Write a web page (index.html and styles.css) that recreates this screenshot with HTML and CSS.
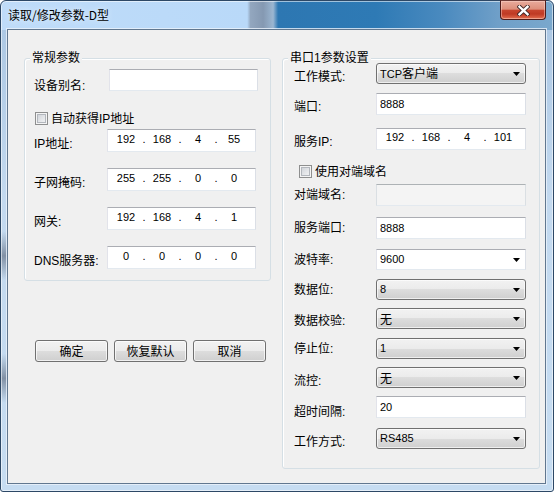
FILE: index.html
```html
<!DOCTYPE html>
<html lang="zh-CN">
<head>
<meta charset="utf-8">
<title>读取/修改参数-D型</title>
<link rel="stylesheet" href="styles.css">
</head>
<body>
<div class="window">
  <div class="titlebar">
    <span class="title">读取/修改参数-D型</span>
    <span class="close">
      <svg width="13" height="11" viewBox="0 0 13 11">
        <path class="x-outline" d="M2.5 1.8L10.5 9.2M10.5 1.8L2.5 9.2"/>
        <path class="x-fill" d="M2.5 1.8L10.5 9.2M10.5 1.8L2.5 9.2"/>
      </svg>
    </span>
  </div>
  <div class="client">
    <div class="left-col">
      <div class="group group-general">
        <div class="group-title">常规参数</div>
        <div class="grid-general">
          <div class="row">
            <span class="label label-alias">设备别名:</span>
            <span class="input input-left"></span>
          </div>
          <div class="row">
            <span class="check check-left"><span class="cb"></span><span class="cb-text">自动获得IP地址</span></span>
          </div>
          <div class="row">
            <span class="label label-ip">IP地址:</span>
            <span class="ip"><span class="oct">192</span><span class="dot">.</span><span class="oct">168</span><span class="dot">.</span><span class="oct">4</span><span class="dot">.</span><span class="oct">55</span></span>
          </div>
          <div class="row">
            <span class="label label-ip">子网掩码:</span>
            <span class="ip"><span class="oct">255</span><span class="dot">.</span><span class="oct">255</span><span class="dot">.</span><span class="oct">0</span><span class="dot">.</span><span class="oct">0</span></span>
          </div>
          <div class="row">
            <span class="label label-ip">网关:</span>
            <span class="ip"><span class="oct">192</span><span class="dot">.</span><span class="oct">168</span><span class="dot">.</span><span class="oct">4</span><span class="dot">.</span><span class="oct">1</span></span>
          </div>
          <div class="row">
            <span class="label label-ip">DNS服务器:</span>
            <span class="ip"><span class="oct">0</span><span class="dot">.</span><span class="oct">0</span><span class="dot">.</span><span class="oct">0</span><span class="dot">.</span><span class="oct">0</span></span>
          </div>
        </div>
      </div>
      <div class="buttons">
        <span class="btn">确定</span>
        <span class="btn">恢复默认</span>
        <span class="btn">取消</span>
      </div>
    </div>

    <div class="group group-serial">
      <div class="group-title">串口1参数设置</div>
      <div class="grid-serial">
        <div class="row">
          <span class="label label-r">工作模式:</span>
          <span class="combo"><span>TCP<span class="zh">客户端</span></span><svg class="arrow" width="7" height="4" viewBox="0 0 7 4"><path d="M0 0H7L3.5 4Z"/></svg></span>
        </div>
        <div class="row">
          <span class="label label-r">端口:</span>
          <span class="input input-r">8888</span>
        </div>
        <div class="row">
          <span class="label label-r">服务IP:</span>
          <span class="ip ip-r"><span class="oct">192</span><span class="dot">.</span><span class="oct">168</span><span class="dot">.</span><span class="oct">4</span><span class="dot">.</span><span class="oct">101</span></span>
        </div>
        <div class="row">
          <span class="check check-right"><span class="cb"></span><span class="cb-text">使用对端域名</span></span>
        </div>
        <div class="row">
          <span class="label label-r label-hi">对端域名:</span>
          <span class="input input-r input-disabled"></span>
        </div>
        <div class="row">
          <span class="label label-r label-hi">服务端口:</span>
          <span class="input input-r">8888</span>
        </div>
        <div class="row">
          <span class="label label-r label-hi">波特率:</span>
          <span class="combo combo-edit"><span>9600</span><svg class="arrow" width="7" height="4" viewBox="0 0 7 4"><path d="M0 0H7L3.5 4Z"/></svg></span>
        </div>
        <div class="row">
          <span class="label label-r label-hi">数据位:</span>
          <span class="combo"><span>8</span><svg class="arrow" width="7" height="4" viewBox="0 0 7 4"><path d="M0 0H7L3.5 4Z"/></svg></span>
        </div>
        <div class="row">
          <span class="label label-r label-mid">数据校验:</span>
          <span class="combo"><span class="zh">无</span><svg class="arrow" width="7" height="4" viewBox="0 0 7 4"><path d="M0 0H7L3.5 4Z"/></svg></span>
        </div>
        <div class="row">
          <span class="label label-r label-hi">停止位:</span>
          <span class="combo"><span>1</span><svg class="arrow" width="7" height="4" viewBox="0 0 7 4"><path d="M0 0H7L3.5 4Z"/></svg></span>
        </div>
        <div class="row">
          <span class="label label-r">流控:</span>
          <span class="combo"><span class="zh">无</span><svg class="arrow" width="7" height="4" viewBox="0 0 7 4"><path d="M0 0H7L3.5 4Z"/></svg></span>
        </div>
        <div class="row">
          <span class="label label-r label-low">超时间隔:</span>
          <span class="input input-r">20</span>
        </div>
        <div class="row">
          <span class="label label-r">工作方式:</span>
          <span class="combo"><span>RS485</span><svg class="arrow" width="7" height="4" viewBox="0 0 7 4"><path d="M0 0H7L3.5 4Z"/></svg></span>
        </div>
      </div>
    </div>
  </div>
</div>
</body>
</html>
```

FILE: styles.css
```css
* { box-sizing: border-box; }

html, body {
  margin: 0;
  padding: 0;
  background: #ffffff;
}

body {
  width: 554px;
  height: 492px;
  overflow: hidden;
  font-family: "Noto Sans CJK SC", sans-serif;
  font-size: 12px;
  color: #000;
}

/* ---------- window frame ---------- */
.window {
  width: 554px;
  height: 492px;
  display: flex;
  flex-direction: column;
  border: 1px solid #2d4866;
  border-radius: 6px 6px 3px 3px;
  padding: 0 7px 7px 6px;
  background:
    linear-gradient(90deg,
      #bfdcf9 0%, #b9d9f9 44.6%, #93a7bf 45.2%, #8599b2 47.5%,
      #9bb6d1 49.3%, #2d77b2 50.2%, #2e7ab5 68%, #4a8abf 80%,
      #6f9fc8 90%, #7aa8cd 100%) 0 0 / 100% 29px no-repeat,
    linear-gradient(180deg,
      rgba(118,132,152,0) 47%, rgba(118,132,152,.85) 52%, rgba(118,132,152,0) 57%,
      rgba(118,132,152,0) 72%, rgba(118,132,152,.85) 77%, rgba(118,132,152,0) 82%) 0 0 / 7px 100% no-repeat,
    linear-gradient(180deg, #a9c5e2 0%, #c3d9ef 40%, #c6dcf1 100%);
  box-shadow: inset 0 0 0 1px rgba(255,255,255,.55);
}

.titlebar {
  height: 28px;
  flex: none;
  display: flex;
  justify-content: space-between;
  align-items: flex-start;
}

.title {
  margin: 7px 0 0 1px;
  line-height: 14px;
  height: 14px;
  font-size: 12px;
  font-family: "Noto Sans CJK SC", sans-serif;
  color: #000;
  text-shadow: 0 0 6px rgba(255,255,255,.8);
}

.close {
  width: 46px;
  height: 20px;
  margin-top: -1px;
  border: 1px solid #4f1c1a;
  border-top-color: #6b3a36;
  border-radius: 0 0 4px 4px;
  background: linear-gradient(180deg,
    #e8ab9c 0%, #dd8f7b 45%, #c7452e 52%, #bf3a24 72%, #d65a3f 90%, #e47a5a 100%);
  box-shadow: inset 0 0 0 1px rgba(255,220,210,.45);
  display: flex;
  align-items: center;
  justify-content: center;
}

.x-outline {
  fill: none;
  stroke: #3d2626;
  stroke-width: 4.2;
  stroke-linecap: square;
}

.x-fill {
  fill: none;
  stroke: #ffffff;
  stroke-width: 2.4;
  stroke-linecap: square;
}

/* ---------- client area ---------- */
.client {
  flex: 1;
  display: flex;
  align-items: flex-start;
  gap: 11px;
  padding: 28px 5px 0 16px;
  background: #f0f0f0;
  border: 1px solid #61778f;
  box-shadow: 0 0 0 1px rgba(235,243,251,.8);
}

.left-col {
  width: 247px;
  flex: none;
  display: flex;
  flex-direction: column;
}

.group {
  display: flex;
  flex-direction: column;
  border: 1px solid #d5dfe5;
  border-radius: 3px;
  box-shadow: inset 1px 1px 0 #ffffff;
}

.group-title {
  align-self: flex-start;
  margin: -8px 0 -2px 5px;
  padding: 0 2px;
  height: 14px;
  line-height: 14px;
  background: #f0f0f0;
  font-family: "Liberation Sans", "Noto Sans CJK SC", sans-serif;
  font-size: 12px;
}

.group-serial {
  width: 258px;
  flex: none;
}

.grid-general {
  display: grid;
  grid-template-rows: 43px 17px 39px 39px 39px 23px;
  padding: 6px 0 11px 9px;
}

.grid-serial {
  display: grid;
  grid-template-rows: 30px 35px 37px 19px 33px 32px 30px 29px 30px 29px 29px 32px 21px;
  padding: 0 13px 19px 11px;
}

.row {
  display: flex;
  align-items: flex-start;
}

/* ---------- labels ---------- */
.label {
  flex: none;
  height: 14px;
  line-height: 14px;
  white-space: nowrap;
  font-family: "Liberation Sans", "Noto Sans CJK SC", sans-serif;
  font-size: 12px;
}

.label-alias { width: 75px; margin-top: 10px; }
.label-ip { width: 73px; margin-top: 8px; }
.label-r { width: 82px; margin-top: 7px; }
.label-r.label-hi { margin-top: 4px; }
.label-r.label-mid { margin-top: 6px; }
.label-r.label-low { margin-top: 9px; }

/* ---------- text inputs ---------- */
.input {
  flex: none;
  width: 149px;
  height: 22px;
  padding: 0 3px;
  background: #ffffff;
  border: 1px solid;
  border-color: #abadb3 #dbdfe6 #e3e9ef #e2e3ea;
  font-family: "Liberation Sans", "Noto Sans CJK SC", sans-serif;
  font-size: 11px;
  line-height: 20px;
  white-space: nowrap;
}

.input-r { width: 150px; }

.input-disabled {
  background: #f4f4f4;
  border-color: #adb2b5 #dadfe3 #e3e9ef #dadfe3;
}

/* ---------- IP address inputs ---------- */
.ip {
  flex: none;
  display: flex;
  width: 149px;
  height: 23px;
  padding-left: 5px;
  background: #ffffff;
  border: 1px solid;
  border-color: #abadb3 #dbdfe6 #e3e9ef #e2e3ea;
  font-family: "Liberation Sans", sans-serif;
  font-size: 11px;
  line-height: 18px;
}

.ip-r {
  width: 150px;
  height: 22px;
  line-height: 17px;
}

.oct {
  width: 26px;
  text-align: center;
}

.dot {
  width: 10px;
  text-align: center;
}

/* ---------- checkboxes ---------- */
.check {
  display: flex;
  align-items: center;
  height: 13px;
}

.check-left { margin-left: 1px; }
.check-right { margin-left: 5px; }

.cb {
  width: 13px;
  height: 13px;
  flex: none;
  border: 1px solid #8e8f8f;
  background: linear-gradient(135deg, #c9cdd3 0%, #e4e6e9 55%, #f7f7f7 100%);
  box-shadow: inset 0 0 0 1px #f4f4f4, inset 0 0 0 2px #b3b7bd;
}

.cb-text {
  margin-left: 3px;
  height: 14px;
  line-height: 14px;
  white-space: nowrap;
  font-family: "Liberation Sans", "Noto Sans CJK SC", sans-serif;
  font-size: 12px;
}

/* ---------- combo boxes ---------- */
.combo {
  flex: none;
  width: 150px;
  height: 21px;
  display: flex;
  align-items: center;
  justify-content: space-between;
  padding: 0 5px 0 3px;
  border: 1px solid #707070;
  border-radius: 3px;
  background: linear-gradient(180deg, #f2f2f2 0%, #ebebeb 50%, #dddddd 50%, #cfcfcf 100%);
  box-shadow: inset 0 0 0 1px rgba(255,255,255,.65);
  font-family: "Liberation Sans", "Noto Sans CJK SC", sans-serif;
  font-size: 11px;
  line-height: 17px;
  white-space: nowrap;
}

.combo-edit {
  border-radius: 0;
  background: #ffffff;
  box-shadow: none;
  border-color: #abadb3 #dbdfe6 #e3e9ef #e2e3ea;
}

.zh {
  font-family: "Noto Sans CJK SC", sans-serif;
  font-size: 12px;
}

.arrow {
  flex: none;
  fill: #000;
}

/* ---------- buttons ---------- */
.buttons {
  display: flex;
  gap: 6px;
  margin-top: 59px;
  padding-left: 11px;
}

.btn {
  width: 73px;
  height: 22px;
  border: 1px solid #707070;
  border-radius: 3px;
  background: linear-gradient(180deg, #f2f2f2 0%, #ebebeb 50%, #dddddd 50%, #cfcfcf 100%);
  box-shadow: inset 0 0 0 1px rgba(255,255,255,.7);
  text-align: center;
  line-height: 20px;
  font-family: "Noto Sans CJK SC", sans-serif;
  font-size: 12px;
}
```
